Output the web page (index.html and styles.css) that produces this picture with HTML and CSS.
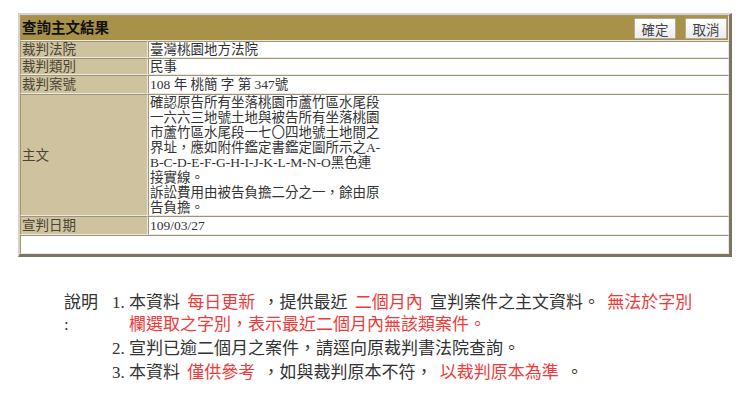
FILE: index.html
```html
<!DOCTYPE html>
<html lang="zh-Hant">
<head>
<meta charset="utf-8">
<title>查詢主文結果</title>
<link rel="stylesheet" href="styles.css">
</head>
<body>
<div class="page">
  <table class="result">
    <tr>
      <td class="head" colspan="2">
        <div class="head-inner">
          <span class="title">查詢主文結果</span>
          <span class="btns"><button class="btn">確定</button><button class="btn">取消</button></span>
        </div>
      </td>
    </tr>
    <tr class="row-s"><td class="lbl">裁判法院</td><td class="val">臺灣桃園地方法院</td></tr>
    <tr class="row-s"><td class="lbl">裁判類別</td><td class="val">民事</td></tr>
    <tr class="row-m"><td class="lbl">裁判案號</td><td class="val">108 年 桃簡 字 第 347號</td></tr>
    <tr><td class="lbl">主文</td><td class="val main-text">確認原告所有坐落桃園市蘆竹區水尾段<br>一六六三地號土地與被告所有坐落桃園<br>市蘆竹區水尾段一七〇四地號土地間之<br>界址，應如附件鑑定書鑑定圖所示之A-<br>B-C-D-E-F-G-H-I-J-K-L-M-N-O黑色連<br>接實線。<br>訴訟費用由被告負擔二分之一，餘由原<br>告負擔。</td></tr>
    <tr class="row-m"><td class="lbl">宣判日期</td><td class="val">109/03/27</td></tr>
    <tr class="row-m"><td class="blank" colspan="2"></td></tr>
  </table>

  <div class="note">
    <div class="note-label">說明<br>:</div>
    <ol class="note-list">
      <li><span class="t">本資料 <span class="red">每日更新</span> ，提供最近 <span class="red">二個月內</span> 宣判案件之主文資料。 <span class="red">無法於字別欄選取之字別，表示最近二個月內無該類案件。</span></span></li>
      <li><span class="t">宣判已逾二個月之案件，請逕向原裁判書法院查詢。</span></li>
      <li><span class="t">本資料 <span class="red">僅供參考</span> ，如與裁判原本不符， <span class="red">以裁判原本為準</span> 。</span></li>
    </ol>
  </div>
</div>
</body>
</html>
```

FILE: styles.css
```css
html, body {
  margin: 0;
  padding: 0;
  background: #ffffff;
}

body {
  font-family: "Liberation Serif", "Noto Sans CJK TC", serif;
  color: #333333;
}

.page {
  padding: 13px 0 0 18px;
}

.result {
  width: 714px;
  border-collapse: separate;
  border-spacing: 0;
  border-style: solid;
  border-width: 2px 3px 3px 2px;
  border-color: #d9d3bf #7c7565 #7c7565 #d9d3bf;
  font-size: 13.5px;
  line-height: 15px;
}

.result td {
  padding: 0 1px;
  border-style: solid;
  border-width: 1px;
  border-color: #9d9480 #ece8dc #ece8dc #9d9480;
  vertical-align: middle;
}

.head {
  background: #a89149;
  height: 24px;
}

.head-inner {
  display: flex;
  align-items: center;
  justify-content: space-between;
}

.title {
  font-weight: bold;
  font-size: 14.5px;
  color: #111111;
}

.btns {
  display: flex;
  gap: 9px;
}

.btn {
  width: 42px;
  height: 21px;
  padding: 0;
  font-family: "Liberation Serif", "Noto Sans CJK TC", serif;
  font-size: 13.5px;
  color: #444444;
  background: linear-gradient(#ffffff, #ebebeb);
  border: 1px solid #b0ab9c;
  border-radius: 1px;
}

.row-s td {
  height: 15px;
}

.row-m td {
  height: 17px;
}

.lbl {
  width: 124px;
  background: #cfc29e;
  color: #4a4436;
}

.val {
  background: #ffffff;
  color: #333333;
}

.main-text {
  padding-top: 2px;
  padding-bottom: 3px;
}

.blank {
  background: #ffffff;
}

.note {
  display: flex;
  margin-top: 35px;
  padding-left: 46px;
  font-size: 17px;
  line-height: 22px;
  color: #333333;
}

.note-label {
  width: 48px;
}

.note-list {
  margin: 0;
  padding-left: 17px;
  width: 575px;
}

.note-list li {
  margin-bottom: 2px;
}

.t {
  word-spacing: 3px;
}

.red {
  color: #f03a3a;
}
```
